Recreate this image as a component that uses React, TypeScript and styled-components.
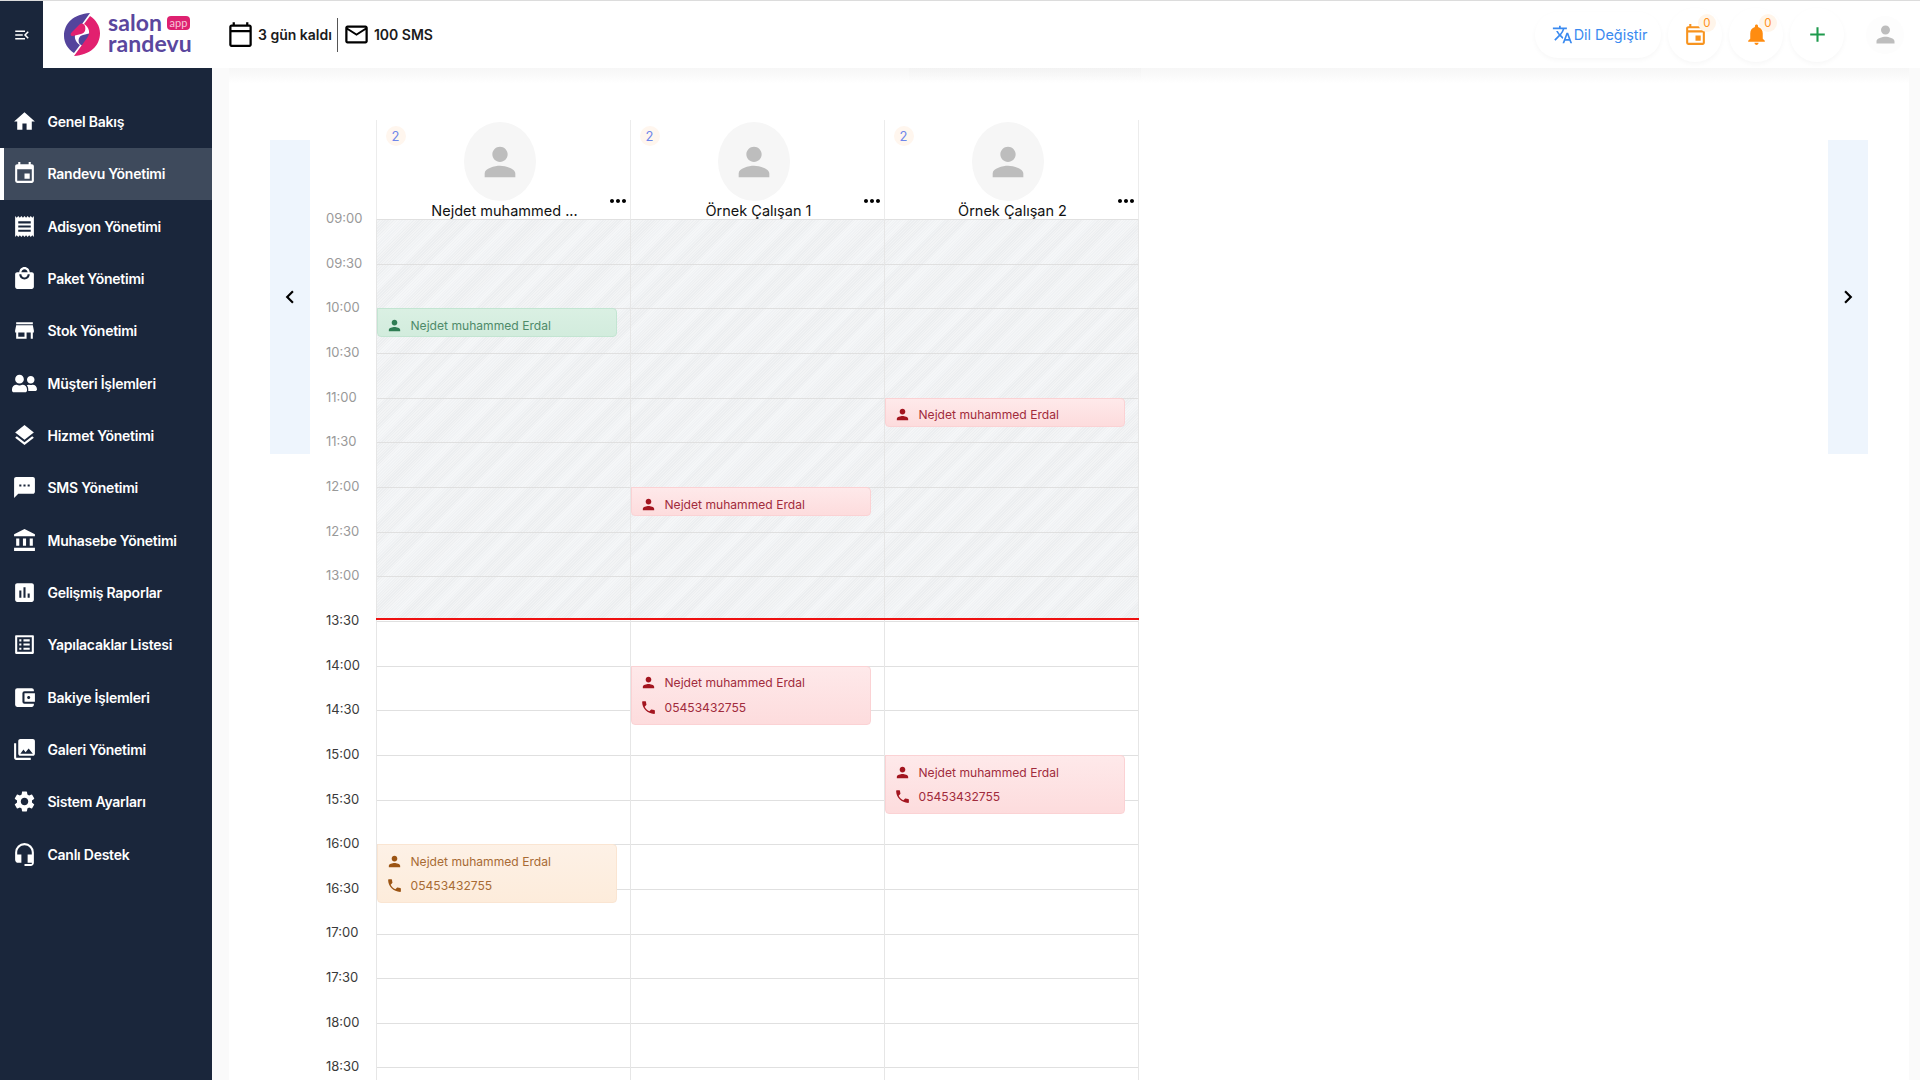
import React from "react";
import styled, { createGlobalStyle } from "styled-components";
import {
  MdHome, MdEvent, MdReceipt, MdLocalMall, MdStore, MdLayers, MdSms, MdAccountBalance,
  MdAssessment, MdListAlt, MdAccountBalanceWallet, MdPhotoLibrary, MdSettings, MdHeadsetMic,
  MdMenuOpen, MdOutlineCalendarToday, MdMailOutline, MdTranslate, MdOutlineEvent, MdNotifications,
  MdAdd, MdPerson, MdPhone, MdMoreHoriz, MdChevronLeft, MdChevronRight,
} from "react-icons/md";
import { FaUserFriends } from "react-icons/fa";

const ROW = 44.66;

const Global = createGlobalStyle`
  html, body { margin: 0; padding: 0; height: 1080px; overflow: hidden; background: #fafafa; }
  body { font-family: Inter, "Liberation Sans", sans-serif; }
  * { box-sizing: border-box; }
`;

const Page = styled.div`
  width: 1920px; height: 1080px; display: flex; flex-direction: column; overflow: hidden;
`;

const Topbar = styled.header`
  height: 68px; flex: none; display: flex; align-items: stretch; background: #fff;
  border-top: 1px solid #dcdcdc;
`;
const MenuBox = styled.div`
  width: 43px; background: #1a263b; color: #fff; display: flex; align-items: center; justify-content: center;
  font-size: 18px;
`;
const LogoBox = styled.div`
  width: 169px; display: flex; align-items: center; padding-left: 20px; gap: 7px;
`;
const LogoWords = styled.div`
  position: relative; display: flex; flex-direction: column; align-items: flex-start; font-family: Lato, sans-serif; font-weight: 700;
  color: #5a479e; font-size: 23px; line-height: 21px; letter-spacing: 0.1px; margin-top: -4px;
`;
const LogoApp = styled.span`
  position: absolute; left: 59px; top: 4px; width: 23px; height: 14px; border-radius: 4px; background: #de2170;
  color: #f7c6da; font-size: 11px; line-height: 13px; text-align: center; letter-spacing: 0; font-weight: 400;
`;
const Quota = styled.div`
  display: flex; align-items: center; margin-left: 15px; color: #1b1b1b; font-size: 14px; font-weight: 600;
`;
const QuotaItem = styled.span`
  display: flex; align-items: center; gap: 4px;
  svg { font-size: 27px; color: #000; }
`;
const QuotaSep = styled.span`
  width: 1px; height: 34px; background: #555; margin: 0 5px;
`;
const TopActions = styled.div`
  margin-left: auto; display: flex; align-items: center; padding-right: 16px; gap: 7px;
`;
const LangPill = styled.div`
  width: 126px; height: 46px; border-radius: 23px; display: flex; align-items: center; justify-content: center; gap: 1px; padding-left: 3px;
  color: #3a8af0; font-size: 14.4px; box-shadow: 0 2px 5px rgba(0,0,0,.035);
  svg { font-size: 21px; }
`;
const RoundAction = styled.div<{ $color: string }>`
  position: relative; width: 54px; height: 54px; border-radius: 50%; display: flex; align-items: center; justify-content: center;
  color: ${p => p.$color}; font-size: 25px; box-shadow: 0 2px 5px rgba(0,0,0,.035);
`;
const CountBadge = styled.span`
  position: absolute; left: 30px; top: 6px; width: 18px; height: 18px; border-radius: 50%; background: #fff5ea;
  color: #ff9220; font-size: 11.5px; line-height: 18px; text-align: center;
`;
const UserAction = styled.div`
  width: 38px; height: 38px; margin-left: 15px; border-radius: 50%; display: flex; align-items: center; justify-content: center;
  color: #bdbdbd; font-size: 27px; background: #fdfdfd;
`;

const Body = styled.div`
  flex: 1; min-height: 0; display: flex;
`;
const Sidebar = styled.nav`
  width: 212px; flex: none; background: #1a263b; padding-top: 27.4px;
`;
const NavItem = styled.div<{ $active?: boolean }>`
  height: 52.33px; display: flex; align-items: center; gap: 10.5px;
  color: #fff; font-size: 14px; font-weight: 600; letter-spacing: -0.25px;
  background: ${p => (p.$active ? "#3e4a5c" : "transparent")};
  border-left: ${p => (p.$active ? "4px solid #fff" : "0 solid transparent")};
  padding-left: ${p => (p.$active ? "8px" : "12px")};
  svg { font-size: 25px; flex: none; width: 25px; }
`;

const Main = styled.main`
  flex: 1; min-width: 0; padding: 0 11px 0 17px; background: #fafafa;
`;
const Card = styled.section`
  position: relative; height: 100%; padding: 52px 41px 0; display: flex; background: linear-gradient(#f6f6f6, #fff 16px);
  &::before {
    content: ""; position: absolute; left: 680px; top: 0; width: 232px; height: 14px;
    background: linear-gradient(rgba(0,0,0,.015), transparent);
  }
`;
const SideNav = styled.div<{ $end?: boolean }>`
  width: 40px; height: 314px; margin-top: 20px; flex: none; background: #eef5fd; color: #000;
  margin-left: ${p => (p.$end ? "auto" : "0")};
  display: flex; align-items: center; justify-content: center; font-size: 26px;
`;
const TimeColumn = styled.div`
  width: 65.5px; flex: none; padding-top: 75.67px; padding-left: 16px;
`;
const TimeLabel = styled.div<{ $past: boolean }>`
  height: ${ROW}px; display: flex; align-items: center; font-size: 13px; color: ${p => (p.$past ? "#999" : "#3a3a3a")};
`;
const Board = styled.div`
  width: 763px; flex: none;
`;
const HeaderRow = styled.div`
  display: flex; height: 99px;
`;
const StaffHead = styled.div`
  position: relative; width: 254px; flex: none; border-left: 1px solid #ececec; display: flex; flex-direction: column; align-items: center;
  &:last-child { border-right: 1px solid #ececec; width: 255px; }
`;
const Avatar = styled.div`
  width: 72px; height: 79px; border-radius: 50%; margin: 2px 7px 0 0; background: #f6f6f6; color: #bdbdbd; font-size: 46px;
  display: flex; align-items: center; justify-content: center; flex: none;
`;
const StaffName = styled.div`
  font-size: 14.5px; line-height: 17px; margin-top: 1px; color: #111; white-space: nowrap; margin-left: 3px;
`;
const StaffCount = styled.span`
  position: absolute; left: 9px; top: 6px; width: 20px; height: 20px; border-radius: 50%; background: #fff6ee;
  color: #6f86ea; font-size: 13px; line-height: 20px; text-align: center;
`;
const StaffMore = styled.span`
  position: absolute; right: 0; top: 69px; color: #000; font-size: 24px; line-height: 0; display: flex;
`;
const Grid = styled.div`
  position: relative; display: flex;
`;
const PastShade = styled.div`
  position: absolute; left: 0; right: 0; top: 0; height: ${ROW * 9 - 3}px;
  background:
    repeating-linear-gradient(135deg, rgba(255,255,255,.35) 0 1px, transparent 1px 2px),
    repeating-linear-gradient(135deg, #eceef0 0 13px, #f0f2f4 16px 24px, #eceef0 27px);
`;
const NowLine = styled.div`
  position: absolute; z-index: 3; left: 0; right: 0; top: ${ROW * 9 - 3}px; height: 2px; background: #ee1111;
`;
const Column = styled.div`
  position: relative; z-index: 1; width: 254px; flex: none; border-left: 1px solid #e6e6e6;
  &:last-of-type { border-right: 1px solid #e6e6e6; width: 255px; }
`;
const Slot = styled.div`
  height: ${ROW}px; border-top: 1px solid #e0e0e0;
`;
const toneMap = {
  green: { bg: "linear-gradient(#daf0e3,#d2ecdd)", border: "#c3e5d2", text: "#4e8a69", icon: "#2f7d53" },
  red: { bg: "linear-gradient(#fee9ea,#fddcdd)", border: "#fbd2d4", text: "#a12b3c", icon: "#a3151f" },
  orange: { bg: "linear-gradient(#fdf1e6,#fdecdb)", border: "#fae5d2", text: "#a86b34", icon: "#9c5514" },
};
type Tone = keyof typeof toneMap;
const Booking = styled.div<{ $tone: Tone; $slot: number; $tall: boolean }>`
  position: absolute; z-index: 2; left: 0; top: ${p => p.$slot * ROW}px; width: 240px; height: ${p => (p.$tall ? 59 : 29)}px;
  border-radius: 0 4px 4px 4px; background: ${p => toneMap[p.$tone].bg}; border: 1px solid ${p => toneMap[p.$tone].border};
  color: ${p => toneMap[p.$tone].text}; padding: 4px 0 0 8px; font-size: 12.1px;
  svg { color: ${p => toneMap[p.$tone].icon}; font-size: 17px; flex: none; }
`;
const BookingLine = styled.div`
  height: 24.5px; display: flex; align-items: center; gap: 8px;
`;

const menu: [React.ComponentType, string][] = [
  [MdHome, "Genel Bakış"], [MdEvent, "Randevu Yönetimi"], [MdReceipt, "Adisyon Yönetimi"], [MdLocalMall, "Paket Yönetimi"],
  [MdStore, "Stok Yönetimi"], [FaUserFriends, "Müşteri İşlemleri"], [MdLayers, "Hizmet Yönetimi"], [MdSms, "SMS Yönetimi"],
  [MdAccountBalance, "Muhasebe Yönetimi"], [MdAssessment, "Gelişmiş Raporlar"], [MdListAlt, "Yapılacaklar Listesi"],
  [MdAccountBalanceWallet, "Bakiye İşlemleri"], [MdPhotoLibrary, "Galeri Yönetimi"], [MdSettings, "Sistem Ayarları"], [MdHeadsetMic, "Canlı Destek"],
];

const times = Array.from({ length: 21 }, (_, i) => {
  const m = 540 + i * 30;
  return `${String(Math.floor(m / 60)).padStart(2, "0")}:${m % 60 ? "30" : "00"}`;
});

type B = { slot: number; tone: Tone; phone?: boolean };
const staff: { name: string; bookings: B[] }[] = [
  { name: "Nejdet muhammed ...", bookings: [{ slot: 2, tone: "green" }, { slot: 14, tone: "orange", phone: true }] },
  { name: "Örnek Çalışan 1", bookings: [{ slot: 6, tone: "red" }, { slot: 10, tone: "red", phone: true }] },
  { name: "Örnek Çalışan 2", bookings: [{ slot: 4, tone: "red" }, { slot: 12, tone: "red", phone: true }] },
];

const half = "M27 1C11 2 1 11 1 24c0 7 4 13 10 17l6-8c-5-3-7-9-3-14L27 1zM16 31c-1-4 0-7 4-8l8-2c3 0 3 2 1 4l-7 7c-2 2-4 2-6-1z";

const LogoMark = () => (
  <svg width="38" height="45" viewBox="0 0 38 45" aria-hidden="true">
    <path fill="#54449c" d={half} />
    <path fill="#e2206f" d={half} transform="rotate(180 19 22.5)" />
  </svg>
);

export default function App() {
  return (
    <Page>
      <Global />
      <Topbar>
        <MenuBox><MdMenuOpen /></MenuBox>
        <LogoBox>
          <LogoMark />
          <LogoWords>
            <span>salon</span>
            <span>randevu</span>
            <LogoApp>app</LogoApp>
          </LogoWords>
        </LogoBox>
        <Quota>
          <QuotaItem><MdOutlineCalendarToday />3 gün kaldı</QuotaItem>
          <QuotaSep />
          <QuotaItem><MdMailOutline />100 SMS</QuotaItem>
        </Quota>
        <TopActions>
          <LangPill><MdTranslate />Dil Değiştir</LangPill>
          <RoundAction $color="#f7931e"><MdOutlineEvent /><CountBadge>0</CountBadge></RoundAction>
          <RoundAction $color="#ff8c10"><MdNotifications /><CountBadge>0</CountBadge></RoundAction>
          <RoundAction $color="#1f9a4d"><MdAdd /></RoundAction>
          <UserAction><MdPerson /></UserAction>
        </TopActions>
      </Topbar>
      <Body>
        <Sidebar>
          {menu.map(([Icon, label]) => (
            <NavItem key={label} $active={label === "Randevu Yönetimi"}><Icon />{label}</NavItem>
          ))}
        </Sidebar>
        <Main>
          <Card>
            <SideNav><MdChevronLeft /></SideNav>
            <TimeColumn>
              {times.map((t, i) => <TimeLabel key={t} $past={i < 9}>{t}</TimeLabel>)}
            </TimeColumn>
            <Board>
              <HeaderRow>
                {staff.map(s => (
                  <StaffHead key={s.name}>
                    <StaffCount>2</StaffCount>
                    <Avatar><MdPerson /></Avatar>
                    <StaffName>{s.name}</StaffName>
                    <StaffMore><MdMoreHoriz /></StaffMore>
                  </StaffHead>
                ))}
              </HeaderRow>
              <Grid>
                <PastShade />
                <NowLine />
                {staff.map(s => (
                  <Column key={s.name}>
                    {times.map(t => <Slot key={t} />)}
                    {s.bookings.map(b => (
                      <Booking key={b.slot} $slot={b.slot} $tone={b.tone} $tall={!!b.phone}>
                        <BookingLine><MdPerson />Nejdet muhammed Erdal</BookingLine>
                        {b.phone && <BookingLine><MdPhone />05453432755</BookingLine>}
                      </Booking>
                    ))}
                  </Column>
                ))}
              </Grid>
            </Board>
            <SideNav $end><MdChevronRight /></SideNav>
          </Card>
        </Main>
      </Body>
    </Page>
  );
}
